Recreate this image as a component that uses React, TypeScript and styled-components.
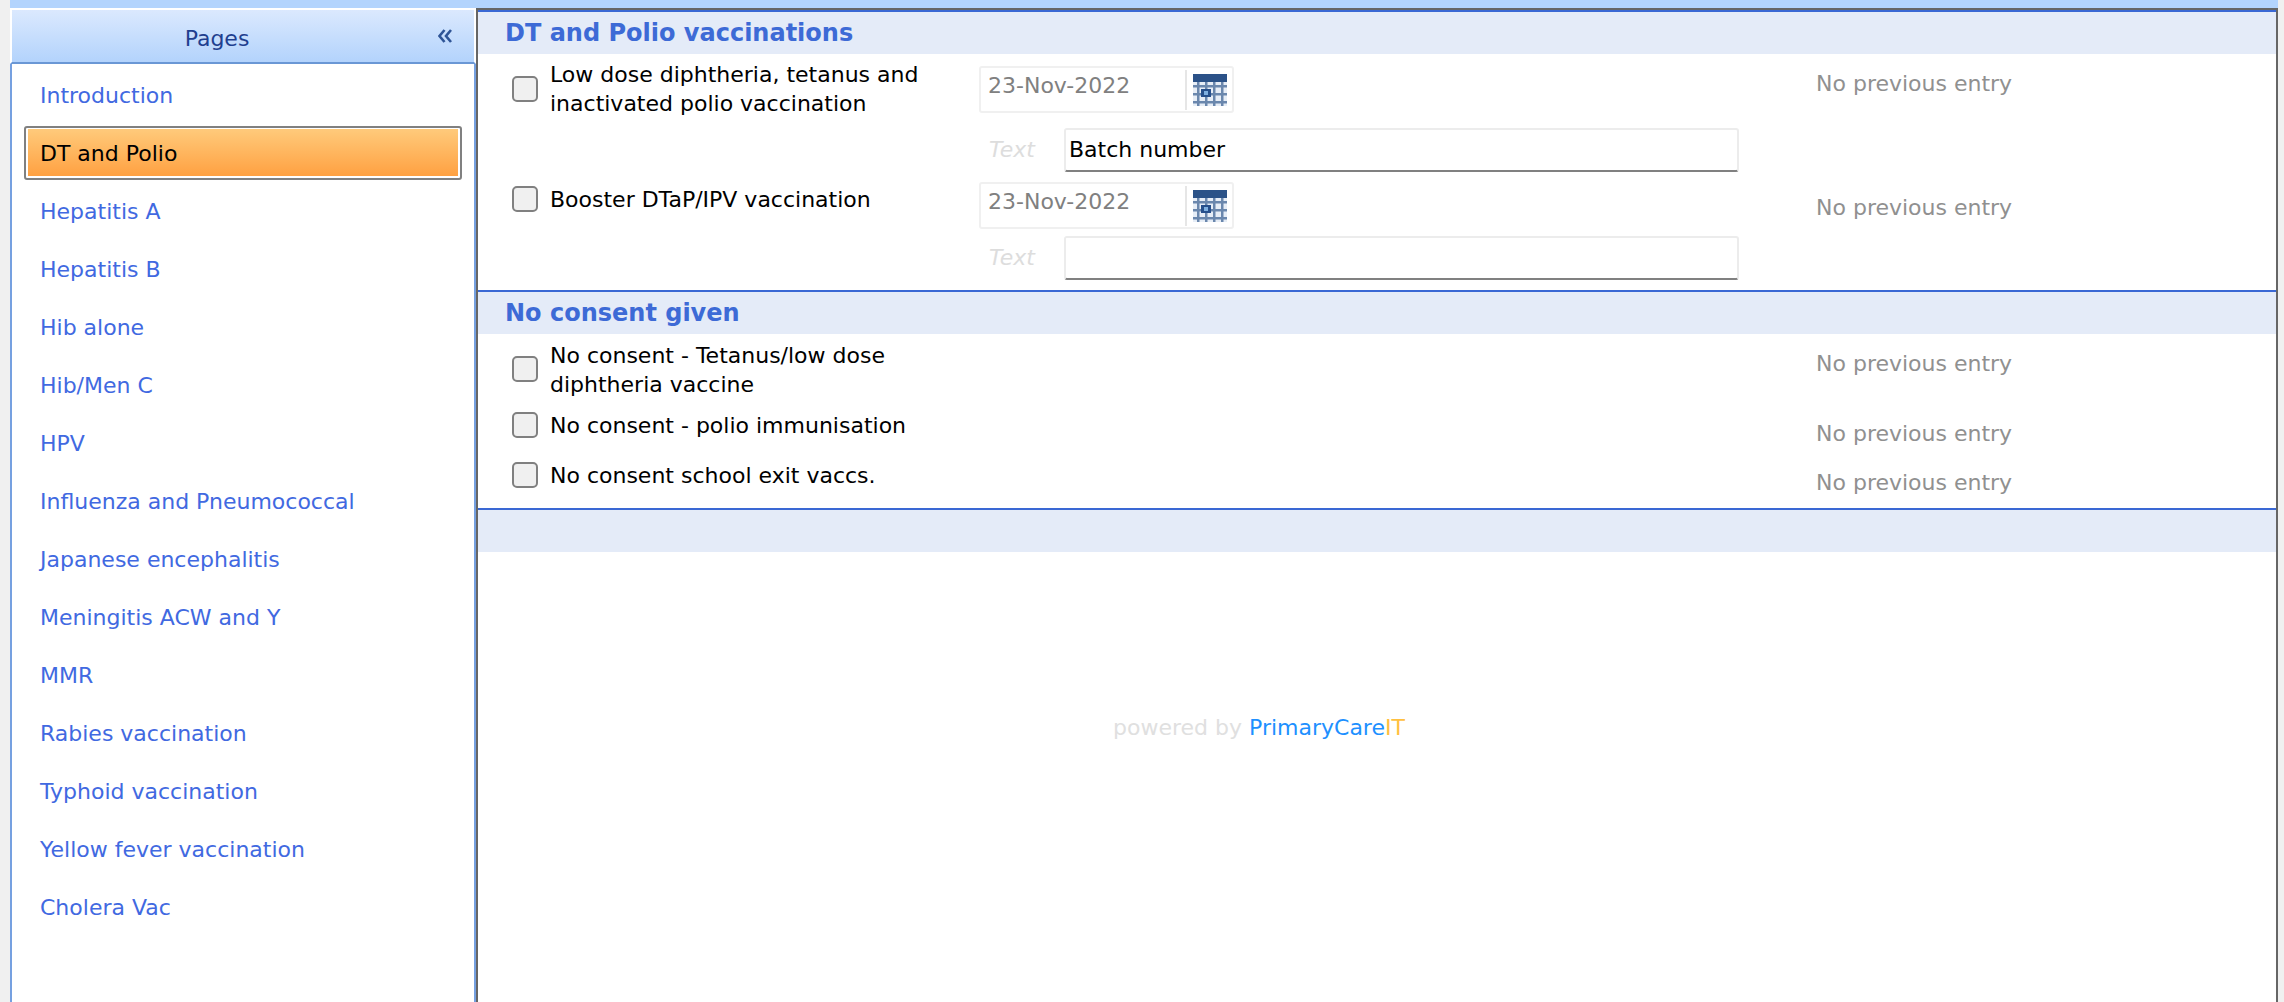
import React from "react";
import styled, { createGlobalStyle } from "styled-components";

const Global = createGlobalStyle`
  html, body { margin: 0; padding: 0; background: #f0f0f0; }
  body { font-family: "DejaVu Sans", sans-serif; font-size: 22px; overflow: hidden; }
`;
const Page = styled.div`
  width: 2284px; height: 1002px; padding: 0 6px 0 10px; box-sizing: border-box;
  display: flex; flex-direction: column; overflow: hidden;
`;
const TopBar = styled.div`height: 8px; background: #b3d4fd; flex: none;`;
const Layout = styled.div`flex: 1; display: flex; min-height: 0;`;
const Sidebar = styled.aside`
  width: 466px; flex: none; box-sizing: border-box; background: #fff;
  display: flex; flex-direction: column; padding-top: 2px;
`;
const SideHead = styled.div`
  height: 54px; flex: none; box-sizing: border-box; position: relative;
  background: linear-gradient(#dbe9fe, #b3d3fc) padding-box;
  border: solid #fff; border-width: 0 2px; border-bottom: 2px solid #6a97d5;
  display: flex; align-items: center; justify-content: center;
  color: #1f3f8f; font-size: 22px; padding: 4px 52px 0 0;
`;
const Collapse = styled.svg`position: absolute; right: 22px; top: 19px;`;
const Nav = styled.div`
  flex: 1; display: flex; flex-direction: column; padding: 2px 12px 0;
  border: solid #75a0e0; border-width: 0 2px;
`;
const NavItem = styled.div<{ $active?: boolean }>`
  height: 58px; box-sizing: border-box; display: flex; align-items: center;
  padding-left: 16px; color: #4169e1; white-space: nowrap;
  ${p => p.$active && `
    height: 54px; margin: 2px 0; padding-left: 14px; color: #000;
    border: 2px solid #808080; border-radius: 3px;
    background: linear-gradient(#ffcb7c, #ff9f3f) padding-box;
    box-shadow: inset 0 1px 0 #fff, inset 0 -2px 0 #fff, inset 2px 0 0 #fff, inset -2px 0 0 #fff;
  `}
`;
const Main = styled.main`
  flex: 1; min-width: 0; background: #fff; border: solid #666; border-width: 2px 2px 0 2px;
`;
const SectionHead = styled.div`
  height: 44px; box-sizing: border-box; border-top: 2px solid #3a68d4; background: #e4ebf8;
  padding-left: 27px; display: flex; align-items: center;
  color: #3d6ad6; font-weight: 700; font-size: 24px;
`;
const Entry = styled.div<{ $pt: number; $pb: number }>`
  display: grid; grid-template-columns: 38px 429px 837px 1fr;
  padding: ${p => p.$pt}px 0 ${p => p.$pb}px 34px; align-items: start;
`;
const Check = styled.input.attrs({ type: "checkbox" })<{ $top: number }>`
  appearance: none; margin: ${p => p.$top}px 0 0; width: 26px; height: 26px; box-sizing: border-box;
  background: #f0f0f0; border: 2px solid #808080; border-radius: 5px;
`;
const Label = styled.div<{ $top: number }>`
  margin-top: ${p => p.$top}px; line-height: 29px; color: #000; white-space: pre-line;
`;
const Prev = styled.div<{ $top: number }>`
  margin-top: ${p => p.$top}px; line-height: 28px; color: #909090; white-space: nowrap;
`;
const Fields = styled.div`display: flex; flex-direction: column;`;
const DateBox = styled.div`
  width: 255px; height: 47px; box-sizing: border-box; border: 2px solid #f0f0f0; border-radius: 3px;
  display: flex; align-items: center; padding: 0 5px 0 7px; color: #808080;
`;
const DateText = styled.span`flex: 1; padding-bottom: 8px; white-space: nowrap;`;
const Divider = styled.span`width: 2px; height: 40px; background: #e6e6e6; margin-right: 6px;`;
const FieldRow = styled.div<{ $top: number }>`
  display: flex; align-items: center; margin-top: ${p => p.$top}px;
`;
const FieldLabel = styled.span`
  width: 85px; box-sizing: border-box; padding: 0 0 2px 10px; font-style: italic; color: #ddd;
`;
const TextBox = styled.div`
  width: 675px; height: 44px; box-sizing: border-box; border: 2px solid #ececec; border-bottom-color: #808080;
  border-radius: 3px; padding: 0 0 2px 3px; display: flex; align-items: center; color: #000;
`;
const Band = styled.div`height: 44px; box-sizing: border-box; border-top: 2px solid #3a68d4; background: #e4ebf8;`;
const Powered = styled.div`
  margin-top: 163px; padding-left: 635px; color: #e0e0e0;
`;
const Brand = styled.span`color: #1e90ff;`;
const BrandIT = styled.span`color: #ffc040;`;

const CalendarIcon = () => (
  <svg width="34" height="32" viewBox="0 0 34 32" style={{ flex: "none" }}>
    <rect width="34" height="32" fill="#e6edf6" />
    <rect width="34" height="8" fill="#2b5288" />
    {[0, 1, 2, 3].map(i => <rect key={i} x={i * 8 + 4} y="8" width="2.5" height="24" fill="#6a87ad" />)}
    {[0, 1, 2].map(i => <rect key={i} x="0" y={11 + i * 8} width="34" height="2.5" fill="#6a87ad" />)}
    <rect x="8" y="15" width="10" height="8" fill="#27508c" />
    <rect x="11" y="17" width="4" height="4" fill="#7fb0e0" />
  </svg>
);

const pages = ["Introduction", "DT and Polio", "Hepatitis A", "Hepatitis B", "Hib alone", "Hib/Men C", "HPV",
  "Influenza and Pneumococcal", "Japanese encephalitis", "Meningitis ACW and Y", "MMR", "Rabies vaccination",
  "Typhoid vaccination", "Yellow fever vaccination", "Cholera Vac"];

const DateField = () => (
  <DateBox>
    <DateText>23-Nov-2022</DateText>
    <Divider />
    <CalendarIcon />
  </DateBox>
);

export default function App() {
  return (
    <Page>
      <Global />
      <TopBar />
      <Layout>
        <Sidebar>
          <SideHead>
            Pages
            <Collapse width="14" height="14" viewBox="0 0 14 14" fill="none" stroke="#2f5597" strokeWidth="2.6">
              <path d="M6.5 1 1.5 7 6.5 13M13 1 8 7 13 13" />
            </Collapse>
          </SideHead>
          <Nav>
            {pages.map(p => <NavItem key={p} $active={p === "DT and Polio"}>{p}</NavItem>)}
          </Nav>
        </Sidebar>
        <Main>
          <SectionHead>DT and Polio vaccinations</SectionHead>
          <Entry $pt={12} $pb={10}>
            <Check $top={10} />
            <Label $top={-6}>{"Low dose diphtheria, tetanus and\ninactivated polio vaccination"}</Label>
            <Fields>
              <DateField />
              <FieldRow $top={15}><FieldLabel>Text</FieldLabel><TextBox>Batch number</TextBox></FieldRow>
            </Fields>
            <Prev $top={4}>No previous entry</Prev>
          </Entry>
          <Entry $pt={0} $pb={10}>
            <Check $top={4} />
            <Label $top={3}>Booster DTaP/IPV vaccination</Label>
            <Fields>
              <DateField />
              <FieldRow $top={7}><FieldLabel>Text</FieldLabel><TextBox /></FieldRow>
            </Fields>
            <Prev $top={12}>No previous entry</Prev>
          </Entry>
          <SectionHead>No consent given</SectionHead>
          <Entry $pt={7} $pb={0}>
            <Check $top={15} />
            <Label $top={0}>{"No consent - Tetanus/low dose\ndiphtheria vaccine"}</Label>
            <span />
            <Prev $top={9}>No previous entry</Prev>
          </Entry>
          <Entry $pt={13} $pb={0}>
            <Check $top={0} />
            <Label $top={-1}>No consent - polio immunisation</Label>
            <span />
            <Prev $top={8}>No previous entry</Prev>
          </Entry>
          <Entry $pt={14} $pb={11}>
            <Check $top={0} />
            <Label $top={-1}>No consent school exit vaccs.</Label>
            <span />
            <Prev $top={7}>No previous entry</Prev>
          </Entry>
          <Band />
          <Powered>powered by <Brand>PrimaryCare</Brand><BrandIT>IT</BrandIT></Powered>
        </Main>
      </Layout>
    </Page>
  );
}
